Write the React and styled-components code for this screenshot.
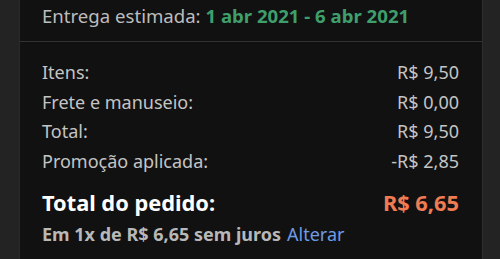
import React from 'react';
import styled, { createGlobalStyle } from 'styled-components';

const GlobalStyle = createGlobalStyle`
  html, body {
    margin: 0;
    padding: 0;
    background: #232323;
  }
  body {
    font-family: 'Noto Sans', 'Open Sans', sans-serif;
  }
`;

const Page = styled.div`
  height: 259px;
  overflow: hidden;
  padding-left: 19px;
  width: 464px;
`;

const Card = styled.div`
  height: 259px;
  background: #111111;
  border-left: 1px solid #2a2a2a;
  border-right: 1px solid #2e2e2e;
`;

const Delivery = styled.div`
  height: 42px;
  box-sizing: border-box;
  padding: 1px 22px 0;
  border-bottom: 1px solid #333333;
  font-size: 18.6px;
  line-height: 30px;
  color: #bdbdbd;
  white-space: nowrap;
`;

const Dates = styled.span`
  color: #3f9f6c;
  font-weight: 700;
`;

const Summary = styled.div`
  padding: 15px 23px 0 22px;
`;

const Row = styled.div`
  display: flex;
  justify-content: space-between;
  align-items: center;
  height: 29.7px;
  font-size: 18px;
  color: #c4c4c4;
`;

const TotalRow = styled.div`
  display: flex;
  justify-content: space-between;
  align-items: center;
  margin-top: 12px;
  height: 30px;
  font-size: 21.8px;
  font-weight: 700;
  color: #ffffff;
`;

const TotalValue = styled.span`
  color: #ef7c52;
`;

const Installments = styled.div`
  height: 32px;
  display: flex;
  align-items: center;
  gap: 6px;
  font-size: 18px;
  font-weight: 700;
  color: #b8b8b8;
`;

const Link = styled.a`
  color: #6e9be6;
  font-weight: 400;
  text-decoration: none;
  cursor: pointer;
`;

const rows = [
  ['Itens:', 'R$ 9,50'],
  ['Frete e manuseio:', 'R$ 0,00'],
  ['Total:', 'R$ 9,50'],
  ['Promoção aplicada:', '-R$ 2,85'],
];

export default function App() {
  return (
    <Page>
      <GlobalStyle />
      <Card>
        <Delivery>
          Entrega estimada: <Dates>1 abr 2021 - 6 abr 2021</Dates>
        </Delivery>
        <Summary>
          {rows.map(([label, value]) => (
            <Row key={label}>
              <span>{label}</span>
              <span>{value}</span>
            </Row>
          ))}
          <TotalRow>
            <span>Total do pedido:</span>
            <TotalValue>R$ 6,65</TotalValue>
          </TotalRow>
          <Installments>
            <span>Em 1x de R$ 6,65 sem juros</span>
            <Link>Alterar</Link>
          </Installments>
        </Summary>
      </Card>
    </Page>
  );
}
